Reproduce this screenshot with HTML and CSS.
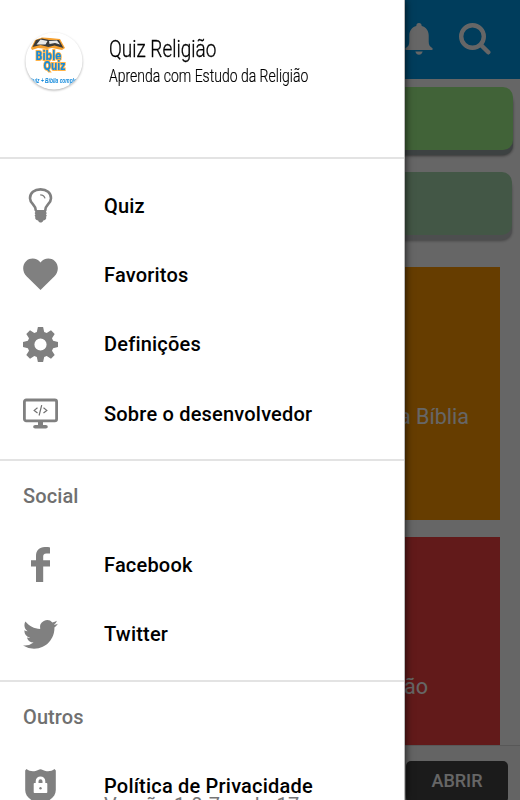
FILE: index.html
```html
<!DOCTYPE html>
<html lang="pt">
<head>
    <meta charset="UTF-8">
    <title>Quiz Religião</title>
    <link rel="stylesheet" href="styles.css">
</head>
<body>
<div class="app">
    <header class="toolbar">
        <svg class="bell" viewBox="0 0 28 32"><path d="M14 0c1.700 0 2.700 1.200 2.700 3 4.500 1.200 7 4.800 7 9.500v6c0 3.500 1 5 3.500 6.500.8.500.7 2-.4 2H1.200c-1.100 0-1.200-1.500-.4-2 2.500-1.500 3.500-3 3.500-6.500v-6c0-4.700 2.500-8.300 7-9.500C11.300 1.200 12.300 0 14 0z"/><path d="M10.300 28.500h7.400c-.5 2-2 3.300-3.700 3.300s-3.200-1.300-3.700-3.300z"/></svg>
        <svg class="search" viewBox="0 0 32 32"><circle cx="13.500" cy="13.500" r="11.300"/><path d="M22 22l7.300 7.300"/></svg>
    </header>
    <main class="content">
        <div class="bar bar-light"></div>
        <div class="bar bar-dark"></div>
        <div class="tile orange">da Bíblia</div>
        <div class="tile red"><span>Religião</span></div>
    </main>
    <footer class="banner"><button class="open">ABRIR</button></footer>
</div>
<div class="scrim"></div>

<nav class="drawer">
    <div class="profile">
        <svg class="avatar" viewBox="0 0 58 58">
            <defs><clipPath id="round"><circle cx="29" cy="29" r="28.500"/></clipPath></defs>
            <circle cx="29" cy="29" r="28.500" fill="#fff"/>
            <g clip-path="url(#round)">
                <path d="M6 16l4-8 7-2.500 8 .5 10 1 5 9-3 2-10-2-5 1-9-1-6 2z" fill="#f5a030"/>
                <path d="M7.500 15l3.500-7 6-1.500 7 1.500 10 0 4.500 8-9-2.500-6 1.500-8-2z" fill="#3a3a3a"/>
                <path d="M11.500 12.500l4-5 7 1.500-2 3.500zM24.500 12l-.5-3 8-.5 3 4-5-1.500z" fill="#e8e8e8"/>
                <g class="logo-text">
                    <text x="10.500" y="28" textLength="26" lengthAdjust="spacingAndGlyphs">Bible</text>
                    <text x="18.500" y="38" textLength="22" lengthAdjust="spacingAndGlyphs">Quiz</text>
                </g>
                <text class="logo-note" x="4" y="51" textLength="52" lengthAdjust="spacingAndGlyphs">Quiz + Bíblia completa</text>
            </g>
        </svg>
        <div class="titles">
            <div class="name">Quiz Religião</div>
            <div class="tagline">Aprenda com Estudo da Religião</div>
        </div>
    </div>

    <div class="group">
        <a class="item">
            <svg class="icon" viewBox="0 0 35 35"><path d="M12.800 22.500c0-6-5.800-6.500-5.800-12.200C7 5 11.300 1.400 17.500 1.400S28 5 28 10.300c0 5.700-5.800 6.200-5.800 12.200" fill="none" stroke="#808080" stroke-width="2.600"/><path d="M17.200 6.800c2.500 0 4.200 1.300 4.800 3.600" fill="none" stroke="#808080" stroke-width="1.300"/><path d="M11.500 22h12l-.5 2 .8 1-.8 1.500.8 1-.8 1.500.3 1c-.3 1.500-1.600 2.200-3 2.500-.5 1.500-1.500 2-2.600 2s-2.100-.5-2.600-2c-1.400-.3-2.700-1-3-2.500l.3-1-.8-1.500.8-1-.8-1.500.8-1z"/></svg>
            <span>Quiz</span>
        </a>
        <a class="item">
            <svg class="icon" viewBox="0 0 35 35"><path d="M17.500 33L3.500 19.200C-1 14.500-.8 7.500 3.300 3.900 7.400.3 14.300 1 17.500 5.400 20.700 1 27.600.3 31.700 3.900c4.100 3.600 4.300 10.600-.2 15.300z"/></svg>
            <span>Favoritos</span>
        </a>
        <a class="item">
            <svg class="icon" viewBox="0 0 35 35"><path fill-rule="evenodd" d="M14.900 0h5.200l1.100 4.900 2.500 1.100L28 3.300 31.700 7 29 11.300l1.100 2.500 4.900 1.100v5.200l-4.900 1.100-1.100 2.500 2.700 4.300-3.700 3.700-4.300-2.700-2.500 1.100-1.100 4.900h-5.200l-1.100-4.900-2.500-1.100L7 31.700 3.300 28 6 23.700l-1.100-2.500L0 20.100v-5.200l4.900-1.100L6 11.300 3.300 7 7 3.300 11.300 6l2.500-1.100zM17.500 11.400a6.100 6.100 0 1 0 0 12.200 6.100 6.100 0 0 0 0-12.200z"/></svg>
            <span>Definições</span>
        </a>
        <a class="item">
            <svg class="icon" viewBox="0 0 35 35"><rect x="1.400" y="4" width="32.200" height="20.800" rx="1.800" fill="none" stroke="#808080" stroke-width="2.800"/><path d="M15 25h5v4h2.800c2.600 0 2.600 3.500 0 3.500H12.200c-2.600 0-2.600-3.500 0-3.500H15z"/><path d="M14.500 11.800l-3.300 2.600 3.300 2.600M20.500 11.800l3.300 2.600-3.300 2.600M18.700 9.200l-2.600 10.300" fill="none" stroke="#707070" stroke-width="1.200"/></svg>
            <span>Sobre o desenvolvedor</span>
        </a>
    </div>

    <div class="group">
        <div class="heading">Social</div>
        <a class="item">
            <svg class="icon" viewBox="0 0 35 35"><path d="M13 35V19.600H8v-6.400h5V9C13 3.500 16.300 0 21.800 0c2.300 0 4.500.2 5.200.4v6h-3.500c-2.800 0-3.300 1.300-3.300 3.200v3.600H27v6.400h-6.800V35z"/></svg>
            <span>Facebook</span>
        </a>
        <a class="item">
            <svg class="icon" viewBox="0 0 24 24"><path d="M23.950 4.570a10 10 0 0 1-2.820.77 4.960 4.960 0 0 0 2.160-2.720 9.900 9.900 0 0 1-3.120 1.180 4.920 4.920 0 0 0-8.380 4.480C7.690 8.090 4.070 6.130 1.640 3.160a4.820 4.820 0 0 0-.67 2.480c0 1.710.87 3.210 2.190 4.100a4.900 4.900 0 0 1-2.230-.62v.06a4.920 4.920 0 0 0 3.950 4.830 5 5 0 0 1-2.210.08 4.940 4.940 0 0 0 4.600 3.420A9.870 9.870 0 0 1 0 19.540a14 14 0 0 0 7.560 2.210c9.050 0 14-7.500 14-13.980 0-.21 0-.42-.02-.63a9.900 9.900 0 0 0 2.410-2.570z"/></svg>
            <span>Twitter</span>
        </a>
    </div>

    <div class="group">
        <div class="heading">Outros</div>
        <a class="item">
            <svg class="icon" viewBox="0 0 35 35"><path d="M3.500 0C6 2.200 9.500 2.600 12.500 2 14.500 1.600 16 .2 17.500.2S20.500 1.600 22.500 2c3 .6 6.500.2 9-2l1.300 1.500V21c0 6-5 11-15.300 14C7.200 32 2.200 27 2.200 21V1.500z"/><path d="M12.700 14v-1.800a4.800 4.800 0 0 1 9.600 0V14h1.200c.5 0 .8.300.8.800v8.400c0 .5-.3.800-.8.800h-12c-.5 0-.8-.3-.8-.8v-8.400c0-.5.300-.8.800-.8zm2.800 0h4v-1.800a2 2 0 0 0-4 0z" fill="#fff"/><circle cx="17.500" cy="19.300" r="1.200"/></svg>
            <div class="lines">
                <span>Política de Privacidade</span>
                <small>Versão 1.0.7 code 17</small>
            </div>
        </a>
    </div>
</nav>
</body>
</html>
```
FILE: styles.css
```css
* {
    box-sizing: border-box;
}
body, html {
    height: 100%;
    margin: 0;
    overflow: hidden;
    font-family: Roboto, "Noto Sans", sans-serif;
}
.app {
    height: 800px;
    display: flex;
    flex-direction: column;
    background: #fff;
}
.toolbar {
    flex: none;
    height: 79px;
    padding: 0 29px 2px 0;
    display: flex;
    justify-content: flex-end;
    align-items: center;
    gap: 26px;
    background: #0099e6;
    fill: #fff;
}
.bell {
    width: 28px;
    height: 32px;
}
.search {
    width: 32px;
    height: 32px;
    fill: none;
    stroke: #fff;
    stroke-width: 4.4;
    stroke-linecap: round;
}
.content {
    flex: 1;
    min-height: 0;
    overflow: hidden;
    padding: 8px 7px 0;
}
.bar {
    height: 63px;
    border-radius: 10px;
}
.bar-light {
    background: #a3f88c;
    box-shadow: 0 5px 0 #98a5a5, 0 6px 3px #888;
}
.bar-dark {
    margin: 22px 1px 0;
    background: #a8d9ae;
    box-shadow: 0 5px 0 #c0c2c6, 0 6px 3px #aaa;
}
.tile {
    height: 253px;
    margin: 32px 13px 0;
    padding-right: 31px;
    display: flex;
    align-items: center;
    justify-content: flex-end;
    color: #fff;
    font-size: 21.5px;
    padding-top: 46px;
}
.orange {
    background: #ff9900;
}
.red {
    margin-top: 17px;
    padding-right: 72px;
    background: #f44341;
}
.banner {
    flex: none;
    height: 55px;
    padding: 15px 12px 0;
    display: flex;
    justify-content: flex-end;
    border-top: 1px solid #ddd;
    background: #fafafa;
}
.open {
    width: 102px;
    height: 42px;
    padding: 0 0 3px;
    border: 0;
    border-radius: 5px;
    background: #444;
    color: #fff;
    font: 500 18px Roboto, sans-serif;
}
.scrim {
    position: absolute;
    inset: 0;
    background: rgba(0, 0, 0, 0.6);
}
.drawer {
    position: absolute;
    top: 0;
    left: 0;
    width: 405px;
    height: 800px;
    overflow: hidden;
    background: #fff;
    border-right: 1px solid #bbb;
    box-shadow: 0 0 8px rgba(0, 0, 0, 0.8);
}
.profile {
    height: 157px;
    padding: 32px 0 0 25px;
    display: flex;
    gap: 26px;
}
.avatar {
    width: 58px;
    height: 58px;
    filter: drop-shadow(0 1px 1px rgba(0, 0, 0, 0.3));
}
.logo-text {
    font: bold 13px "DejaVu Sans", sans-serif;
    fill: #168bdc;
    stroke: #ffb347;
    stroke-width: 2px;
    paint-order: stroke;
}
.logo-note {
    font: italic bold 7.5px "Liberation Sans", sans-serif;
    fill: #168bdc;
}
.titles {
    padding-top: 1px;
    width: 250px;
    white-space: nowrap;
    color: #000;
}
.name {
    margin-top: 2px;
    font-size: 24px;
    font-weight: 300;
    line-height: 29px;
    transform: scaleX(0.79);
    transform-origin: left;
    -webkit-text-stroke: 0.3px #000;
}
.tagline {
    font-size: 17.5px;
    line-height: 24px;
    font-weight: 300;
    transform: scaleX(0.8);
    transform-origin: left;
    -webkit-text-stroke: 0.2px #000;
}
.group {
    border-top: 2px solid #e3e3e3;
    padding: 12px 0 10.5px 23px;
}
.group:has(.heading) {
    padding: 0 0 11.5px 23px;
}
.heading {
    height: 69.500px;
    line-height: 70px;
    color: #707070;
    font-size: 20px;
    font-weight: 500;
    letter-spacing: 0.1px;
}
.item {
    height: 69.300px;
    display: flex;
    align-items: center;
    gap: 46px;
    color: #000;
    font-size: 20px;
    font-weight: 500;
    letter-spacing: 0.2px;
    white-space: nowrap;
}
.icon {
    width: 35px;
    height: 35px;
    flex: none;
    fill: #808080;
}
.lines {
    height: 24px;
    display: flex;
    flex-direction: column;
}
.lines span {
    line-height: 24px;
}
.lines small {
    margin-top: -5px;
    line-height: 24px;
    color: #757575;
    font-size: 20px;
    font-weight: 400;
    letter-spacing: 0.4px;
}
```
